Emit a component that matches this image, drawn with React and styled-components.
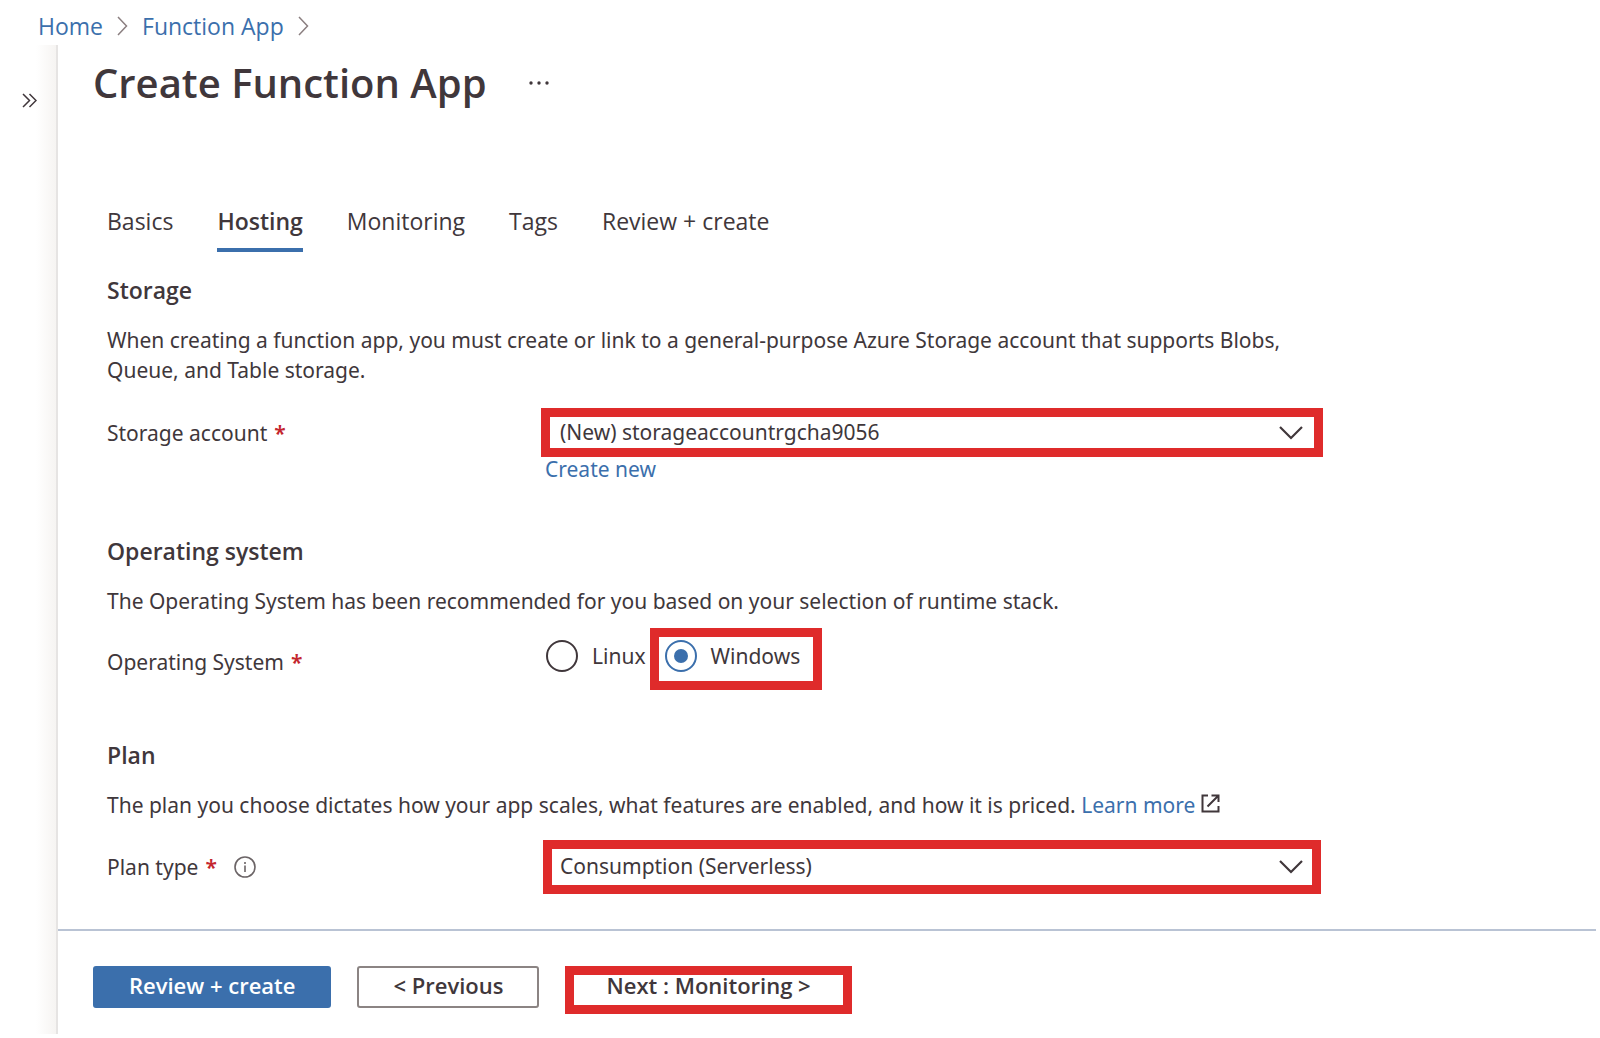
import React, { useState } from "react";
import styled, { createGlobalStyle } from "styled-components";

const ink = "#40373b";
const blue = "#3b6fac";
const red = "#df2b2b";
const display = `"Open Sans", "Noto Sans", sans-serif`;

const GlobalStyle = createGlobalStyle`
  *, *::before, *::after { box-sizing: border-box; }
  body {
    margin: 0;
    background: #fff;
    color: ${ink};
    font-family: "Noto Sans", "Open Sans", sans-serif;
    font-size: 21px;
    line-height: 30px;
  }
  button, select, input { font: inherit; color: inherit; }
`;

const Page = styled.div`
  display: flex;
  flex-direction: column;
  min-height: 100vh;
  padding: 0 4px 4px 0;
`;

const Breadcrumb = styled.nav`
  display: flex;
  align-items: center;
  gap: 14px;
  padding: 11px 38px 4px;
  font-family: ${display};
  font-size: 23px;
`;

const Link = styled.a`
  color: ${blue};
  text-decoration: none;
`;

const Body = styled.div`
  display: grid;
  grid-template-columns: 58px minmax(0, 1fr);
  flex: 1;
`;

const Rail = styled.aside`
  padding: 45px 0 0 20px;
  border-right: 2px solid #e6e4e3;
  background: linear-gradient(to left, #f6f4f2, #fff 20px);
`;

const IconButton = styled.button`
  display: flex;
  align-items: center;
  justify-content: center;
  width: ${(p) => p.$width}px;
  height: 20px;
  padding: 0;
  border: 0;
  background: none;
`;

const Blade = styled.main`
  display: flex;
  flex-direction: column;
`;

const TitleBar = styled.header`
  display: flex;
  align-items: center;
  gap: 42px;
  padding: 12px 35px 0;
`;

const Title = styled.h1`
  margin: 0;
  font-family: ${display};
  font-size: 40px;
  line-height: 52px;
  font-weight: 600;
`;

const Content = styled.div`
  width: 100%;
  max-width: 1314px;
  padding: 97px 49px 35px;
`;

const Tabs = styled.div`
  display: flex;
  gap: 44px;
  margin-bottom: 23px;
`;

const Tab = styled.button`
  padding: 0 0 12px;
  border: 0;
  border-bottom: 4px solid ${(p) => (p.$active ? blue : "transparent")};
  background: none;
  font-family: ${display};
  font-size: 23px;
  font-weight: ${(p) => (p.$active ? 600 : 400)};
`;

const Section = styled.section`
  margin-bottom: ${(p) => p.$gap || 0}px;
`;

const Heading = styled.h2`
  margin: 0 0 20px;
  font-family: ${display};
  font-size: 23px;
  line-height: 30px;
  font-weight: 600;
`;

const Text = styled.p`
  margin: 0 0 ${(p) => p.$gap}px;
`;

const Row = styled.div`
  display: grid;
  grid-template-columns: 434px minmax(0, 1fr);
  align-items: center;
`;

const Label = styled.label`
  display: flex;
  align-items: center;
  gap: 7px;
  padding-top: ${(p) => p.$drop || 0}px;
`;

const Required = styled.span`
  color: #c4262e;
  font-weight: 600;
`;

const InfoIcon = styled.svg`
  margin-left: 10px;
`;

const SelectBox = styled.div`
  position: relative;
  margin: 0 ${(p) => p.$inset}px;
`;

const Select = styled.select`
  display: block;
  width: 100%;
  height: ${(p) => p.$height}px;
  padding: 0 40px 2px ${(p) => 10 - p.$inset}px;
  border: 9px solid ${red};
  border-radius: 0;
  background: #fff;
  appearance: none;
`;

const Chevron = styled.svg`
  position: absolute;
  top: 50%;
  right: ${(p) => 20 - p.$inset}px;
  transform: translateY(-50%);
  pointer-events: none;
`;

const Below = styled.div`
  padding-left: 438px;
  line-height: 24px;
`;

const Radios = styled.div`
  display: flex;
  align-items: center;
`;

const Option = styled.label`
  display: flex;
  align-items: center;
  gap: 14px;
  height: 62px;
  padding: ${(p) => (p.$marked ? "0 13px 6px 6px" : "0 4px 6px 5px")};
  border: ${(p) => (p.$marked ? `9px solid ${red}` : "0")};
`;

const Radio = styled.input`
  display: grid;
  place-items: center;
  width: 32px;
  height: 32px;
  margin: 0;
  border: 2px solid ${ink};
  border-radius: 50%;
  background: #fff;
  appearance: none;

  &:checked { border-color: ${blue}; }
  &:checked::before {
    content: "";
    width: 14px;
    height: 14px;
    border-radius: 50%;
    background: ${blue};
  }
`;

const Footer = styled.footer`
  display: flex;
  align-items: flex-start;
  gap: 26px;
  padding: 35px 35px 20px;
  border-top: 2px solid #b9c3d4;
`;

const Button = styled.button`
  height: 42px;
  padding: 0 34px 4px;
  border: 2px solid ${(p) => (p.$primary ? blue : "#8b8483")};
  border-radius: 3px;
  background: ${(p) => (p.$primary ? blue : "#fff")};
  color: ${(p) => (p.$primary ? "#fff" : ink)};
  font-family: ${display};
  font-size: 22px;
  line-height: 20px;
  font-weight: 600;
`;

const NextButton = styled(Button)`
  height: 48px;
  padding: 0 32px 10px;
  border: 9px solid ${red};
  border-radius: 0;
`;

const Separator = () => (
  <svg width="11" height="20" viewBox="0 0 11 20" fill="none" stroke="#8b7f80" strokeWidth="1.5" aria-hidden="true">
    <path d="M1 1l8.500 9L1 19" />
  </svg>
);

const Dropdown = ({ id, height, inset, value }) => (
  <SelectBox $inset={inset}>
    <Select id={id} $height={height} $inset={inset}>
      <option>{value}</option>
    </Select>
    <Chevron $inset={inset} width="24" height="14" viewBox="0 0 24 14" fill="none" stroke={ink} strokeWidth="2.2" aria-hidden="true">
      <path d="M1 1l11 11L23 1" />
    </Chevron>
  </SelectBox>
);

const tabs = ["Basics", "Hosting", "Monitoring", "Tags", "Review + create"];

export default function App() {
  const [tab, setTab] = useState("Hosting");
  const [os, setOs] = useState("Windows");

  return (
    <Page>
      <GlobalStyle />
      <Breadcrumb aria-label="Breadcrumb">
        <Link href="#home">Home</Link>
        <Separator />
        <Link href="#function-app">Function App</Link>
        <Separator />
      </Breadcrumb>
      <Body>
        <Rail>
          <IconButton $width={19} aria-label="Expand menu">
            <svg width="15" height="15" viewBox="0 0 15 15" fill="none" stroke={ink} strokeWidth="1.5">
              <path d="M1 1l6.500 6.500L1 14M7.500 1L14 7.500L7.500 14" />
            </svg>
          </IconButton>
        </Rail>
        <Blade>
          <TitleBar>
            <Title>Create Function App</Title>
            <IconButton $width={20} aria-label="More actions">
              <svg width="20" height="4" viewBox="0 0 20 4" fill={ink}>
                <circle cx="2" cy="2" r="1.700" />
                <circle cx="10" cy="2" r="1.700" />
                <circle cx="18" cy="2" r="1.700" />
              </svg>
            </IconButton>
          </TitleBar>
          <Content>
            <Tabs role="tablist">
              {tabs.map((name) => (
                <Tab key={name} role="tab" aria-selected={tab === name} $active={tab === name} onClick={() => setTab(name)}>
                  {name}
                </Tab>
              ))}
            </Tabs>

            <Section $gap={55}>
              <Heading>Storage</Heading>
              <Text $gap={23}>
                When creating a function app, you must create or link to a general-purpose Azure Storage account that
                supports Blobs, Queue, and Table storage.
              </Text>
              <Row>
                <Label htmlFor="storage">
                  Storage account <Required>*</Required>
                </Label>
                <Dropdown id="storage" height={49} inset={0} value="(New) storageaccountrgcha9056" />
              </Row>
              <Below>
                <Link href="#create">Create new</Link>
              </Below>
            </Section>

            <Section $gap={50}>
              <Heading>Operating system</Heading>
              <Text $gap={12}>
                The Operating System has been recommended for you based on your selection of runtime stack.
              </Text>
              <Row role="radiogroup" aria-labelledby="os-label">
                <Label as="span" id="os-label" $drop={6}>
                  Operating System <Required>*</Required>
                </Label>
                <Radios>
                  {["Linux", "Windows"].map((name) => (
                    <Option key={name} $marked={name === "Windows"}>
                      <Radio type="radio" name="os" checked={os === name} onChange={() => setOs(name)} />
                      {name}
                    </Option>
                  ))}
                </Radios>
              </Row>
            </Section>

            <Section>
              <Heading>Plan</Heading>
              <Text $gap={20}>
                The plan you choose dictates how your app scales, what features are enabled, and how it is priced.{" "}
                <Link href="#learn">Learn more</Link>{" "}
                <svg width="19" height="19" viewBox="0 0 19 19" fill="none" stroke={ink} strokeWidth="2" aria-hidden="true">
                  <path d="M7 1.500H1.500v16h16V12M10.500 1.500h7V8M17.500 1.500L6.500 12.500" />
                </svg>
              </Text>
              <Row>
                <Label htmlFor="plan">
                  Plan type <Required>*</Required>
                  <InfoIcon width="22" height="22" viewBox="0 0 22 22" fill="none" stroke="#6b6466" strokeWidth="1.6" aria-hidden="true">
                    <circle cx="11" cy="11" r="10" />
                    <path d="M11 9.500v6.500M11 6v2" />
                  </InfoIcon>
                </Label>
                <Dropdown id="plan" height={54} inset={2} value="Consumption (Serverless)" />
              </Row>
            </Section>
          </Content>
          <Footer>
            <Button $primary>Review + create</Button>
            <Button>&lt; Previous</Button>
            <NextButton>Next : Monitoring &gt;</NextButton>
          </Footer>
        </Blade>
      </Body>
    </Page>
  );
}
